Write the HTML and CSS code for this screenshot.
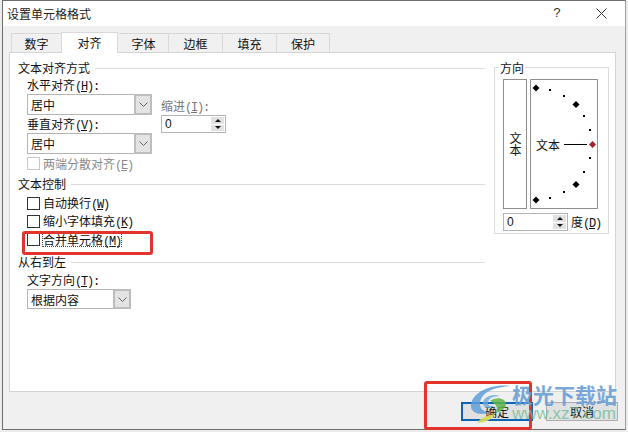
FILE: index.html
```html
<!DOCTYPE html>
<html lang="zh">
<head>
<meta charset="utf-8">
<title>设置单元格格式</title>
<link rel="stylesheet" href="styles.css">
</head>
<body>
<div class="dialog">
  <header class="titlebar">
    <span class="title">设置单元格格式</span>
    <span class="help">?</span>
    <svg class="close" width="11" height="11" viewBox="0 0 11 11"><path d="M0.5 0.5L10.5 10.5M10.500 0.5L0.5 10.5" stroke="#333" fill="none"/></svg>
  </header>
  <div class="client">
    <nav class="tabs">
      <span class="tab t1">数字</span>
      <span class="tab active">对齐</span>
      <span class="tab t1">字体</span>
      <span class="tab t2">边框</span>
      <span class="tab t2">填充</span>
      <span class="tab t3">保护</span>
    </nav>
    <main class="panel">
      <div class="left">
        <div class="legend"><span>文本对齐方式</span><i></i></div>
        <div class="align-block">
          <div class="align-col">
            <label class="lbl">水平对齐<span class="k">(<u>H</u>):</span></label>
            <div class="combo wide"><span class="val">居中</span><b class="arrow"><svg width="9" height="5" viewBox="0 0 9 5"><path d="M0.5 0.5L4.500 4.500L8.500 0.5" stroke="#666" fill="none"/></svg></b></div>
            <label class="lbl">垂直对齐<span class="k">(<u>V</u>):</span></label>
            <div class="combo wide"><span class="val">居中</span><b class="arrow"><svg width="9" height="5" viewBox="0 0 9 5"><path d="M0.5 0.5L4.500 4.500L8.500 0.5" stroke="#666" fill="none"/></svg></b></div>
          </div>
          <div class="indent">
            <label class="lbl dim">缩进<span class="k">(<u>I</u>):</span></label>
            <div class="spin"><span class="num">0</span><b class="spinbtns"><em class="up"></em><em class="down"></em></b></div>
          </div>
        </div>
        <div class="check disabled"><span class="box"></span><span class="txt">两端分散对齐<span class="k">(<u>E</u>)</span></span></div>
        <div class="legend second"><span>文本控制</span><i></i></div>
        <div class="check first"><span class="box"></span><span class="txt">自动换行<span class="k">(<u>W</u>)</span></span></div>
        <div class="check"><span class="box"></span><span class="txt">缩小字体填充<span class="k">(<u>K</u>)</span></span></div>
        <div class="check"><span class="box"></span><span class="txt focus">合并单元格<span class="k">(<u>M</u>)</span></span></div>
        <div class="legend third"><span>从右到左</span><i></i></div>
        <label class="lbl rtl">文字方向<span class="k">(<u>T</u>):</span></label>
        <div class="combo narrow"><span class="val">根据内容</span><b class="arrow"><svg width="9" height="5" viewBox="0 0 9 5"><path d="M0.5 0.5L4.500 4.500L8.500 0.5" stroke="#666" fill="none"/></svg></b></div>
      </div>
      <section class="orient">
        <span class="orient-title">方向</span>
        <div class="orient-row">
          <div class="vtext"><span class="vword">文本</span></div>
          <div class="dial">
            <svg class="dial-art" width="68" height="130" viewBox="0 0 68 130">
              <g fill="#000">
                <path d="M6 5.500l3.500 3.500l-3.500 3.500l-3.500-3.500z"/>
                <path d="M46 22l3.500 3.500l-3.500 3.500l-3.500-3.500z"/>
                <path d="M46 102l3.500 3.500l-3.500 3.500l-3.500-3.500z"/>
                <path d="M6 117.500l3.500 3.500l-3.500 3.500l-3.500-3.500z"/>
                <rect x="19" y="10" width="2" height="2"/>
                <rect x="33" y="16" width="2" height="2"/>
                <rect x="53" y="36" width="2" height="2"/>
                <rect x="59" y="50" width="2" height="2"/>
                <rect x="59" y="78" width="2" height="2"/>
                <rect x="53" y="92" width="2" height="2"/>
                <rect x="33" y="112" width="2" height="2"/>
                <rect x="19" y="118" width="2" height="2"/>
                <rect x="34" y="65" width="23" height="1"/>
              </g>
              <path d="M62.500 62l3.500 3.500l-3.500 3.500l-3.500-3.500z" fill="#a3222c"/>
            </svg>
            <span class="dial-word">文本</span>
          </div>
        </div>
        <div class="deg-row">
          <div class="spin"><span class="num">0</span><b class="spinbtns"><em class="up"></em><em class="down"></em></b></div>
          <span class="deg-lbl">度<span class="k">(<u>D</u>)</span></span>
        </div>
      </section>
    </main>
    <footer class="footer">
      <button class="btn ok">确定</button>
      <button class="btn">取消</button>
    </footer>
  </div>
</div>
<div class="mark m1"></div>
<div class="mark m2"></div>
<div class="wm">
  <svg class="wm-logo" width="46" height="46" viewBox="0 0 46 46">
    <path d="M3 25C4 13 22 3 43 6C31 7 17 10 13 19C10 27 14 32 22 32C14 36 2 34 3 25Z" fill="#5f9fd8" opacity=".85"/>
    <path d="M15 22C16 17 25 13 32 16C24 16 20 19 20 23C20 26 23 27 26 26C22 30 14 28 15 22Z" fill="#6aa9dc" opacity=".8"/>
    <path d="M22 21C28 16 38 18 38 24C38 29 32 32 27 33C31 29 29 24 22 21Z" fill="#5fb548" opacity=".85"/>
    <path d="M9 43C13 37 20 35 27 34C24 40 16 43 9 43Z" fill="#d9dc5a" opacity=".9"/>
  </svg>
  <div class="wm-text"><span class="wm-cn">极光下载站</span><span class="wm-url">www.xz7.com</span></div>
</div>
</body>
</html>
```
FILE: styles.css
```css
* { box-sizing: border-box; }
html, body { margin: 0; padding: 0; }
body { position: relative; width: 628px; height: 432px; overflow: hidden; background: #ececec; font-family: "Noto Sans CJK SC", "Liberation Sans", sans-serif; font-size: 12px; color: #111; }
.k { font-family: "Liberation Mono", monospace; font-size: 12px; letter-spacing: -1.2px; }
.dialog { width: 624px; height: 430px; margin-left: 2px; background: #f0f0f0; border: 1px solid #6e6e6e; border-right-color: #a0a0a0; display: flex; flex-direction: column; }
.titlebar { height: 25px; flex: none; display: flex; align-items: center; padding-left: 4px; background: #fff; }
.title { flex: 1; color: #222; }
.help { font-family: "Liberation Mono", monospace; font-size: 13px; margin-right: 35px; color: #333; }
.close { margin-right: 18px; }
.client { flex: 1; display: flex; flex-direction: column; padding: 6px 0 0 6px; min-height: 0; }
.tabs { height: 20px; flex: none; display: flex; align-items: flex-end; padding-left: 2px; }
.tab { height: 19px; background: #f0f0f0; border: 1px solid #d9d9d9; border-width: 1px 1px 0 0; text-align: center; line-height: 20px; }
.t1 { width: 51px; }
.t2 { width: 54px; }
.t3 { width: 53px; }
.t1:first-child { border-left: 1px solid #d9d9d9; }
.tab.active { width: 57px; height: 21px; margin-bottom: -1px; margin-left: -1px; border-left: 1px solid #d9d9d9; background: #fff; line-height: 20px; position: relative; z-index: 1; }
.tab.active + .tab { margin-left: 1px; width: 50px; }
.panel { height: 340px; width: 607px; flex: none; background: #fff; border: 1px solid #d4d4d4; display: flex; padding: 7px 0 0 8px; }
.left { width: 467px; flex: none; }
.legend { display: flex; align-items: center; gap: 5px; height: 16px; line-height: 16px; }
.legend i { flex: 1; height: 1px; background: #dcdcdc; }
.legend.second { margin-top: 4px; }
.legend.third { margin-top: 6px; }
.lbl { display: block; height: 16px; line-height: 16px; margin-top: 1px; white-space: nowrap; }
.dim { color: #777; }
.align-block { display: flex; padding-left: 9px; }
.align-col { width: 125px; flex: none; margin-right: 9px; }
.combo { height: 21px; margin-top: 1px; display: flex; border: 1px solid #b4b4b4; background: #fff; line-height: 19px; padding-left: 3px; }
.val { flex: 1; }
.wide { width: 125px; }
.combo.narrow { width: 104px; height: 20px; line-height: 20px; margin-left: 9px; }
.arrow { width: 18px; margin: -1px -1px -1px 0; background: #e3e3e3; border: 2px solid #bdbdbd; display: flex; align-items: center; justify-content: center; }
.indent { padding-top: 21px; }
.spin { display: flex; width: 65px; height: 18px; margin-top: 1px; background: #fff; border: 1px solid #b4b4b4; padding-left: 3px; line-height: 16px; font-family: "Liberation Sans", sans-serif; font-size: 12px; }
.num { flex: 1; }
.spinbtns { width: 16px; display: flex; flex-direction: column; gap: 1px; background: #fff; padding: 1px; border-right: 1px solid #b4b4b4; margin-right: -1px; }
.spinbtns em { flex: 1; background: #e1e1e1; display: flex; align-items: center; justify-content: center; }
.spinbtns em::before { content: ""; border-left: 3px solid transparent; border-right: 3px solid transparent; }
.up::before { border-bottom: 3px solid #111; }
.down::before { border-top: 3px solid #111; }
.check { display: flex; align-items: flex-start; height: 18px; padding-left: 9px; gap: 3px; }
.box { width: 13px; height: 13px; margin-top: 3px; background: #fff; border: 1px solid #333; flex: none; }
.txt { line-height: 18px; white-space: nowrap; }
.disabled { height: 17px; margin-top: 1px; color: #8a8a8a; }
.disabled .box { margin-top: 2px; border-color: #c8c8c8; }
.disabled .txt { line-height: 17px; }
.check.first { margin-top: 2px; }
.focus { margin-left: -1px; margin-top: 2px; height: 15px; line-height: 15px; padding: 0 1px; outline: 1px dotted #444; outline-offset: -1px; }
.rtl { padding-left: 9px; margin-top: 2px; }
.orient { position: relative; width: 115px; height: 167px; flex: none; margin: 7px 0 0 9px; padding: 11px 0 0 8px; border: 1px solid #dcdcdc; }
.orient-title { position: absolute; left: 4px; top: -8px; line-height: 16px; background: #fff; padding: 0 1px; }
.orient-row { display: flex; gap: 3px; }
.vtext { width: 24px; height: 130px; border: 1px solid #8f8f8f; display: flex; align-items: center; justify-content: center; }
.vword { writing-mode: vertical-rl; text-orientation: upright; line-height: 14px; }
.dial { position: relative; width: 68px; height: 130px; border: 1px solid #8f8f8f; }
.dial-art { position: absolute; left: -1px; top: -1px; }
.dial-word { position: absolute; left: 5px; top: 57px; line-height: 16px; }
.deg-row { display: flex; align-items: center; gap: 3px; margin-top: 3px; }
.deg-lbl { white-space: nowrap; }
.footer { flex: 1; display: flex; justify-content: flex-end; gap: 13px; padding: 10px 7px 0 0; }
.btn { width: 72px; height: 19px; font: inherit; line-height: 15px; padding: 0; background: #e1e1e1; border: 1px solid #adadad; color: #111; }
.btn.ok { border: 2px solid #0e64b4; }
.mark { position: absolute; border: 3px solid #e2342a; border-radius: 3px; }
.m1 { left: 22px; top: 231px; width: 131px; height: 24px; }
.m2 { left: 424px; top: 381px; width: 108px; height: 49px; }
.wm { position: absolute; left: 468px; top: 380px; display: flex; }
.wm-text { display: flex; flex-direction: column; margin: 3px 0 0 -2px; }
.wm-cn { font-size: 21px; font-weight: 700; color: #6b9ed6; line-height: 22px; opacity: .9; white-space: nowrap; }
.wm-url { font-family: "Liberation Sans", sans-serif; font-size: 17px; color: #6dbb96; line-height: 18px; opacity: .75; white-space: nowrap; }
```
